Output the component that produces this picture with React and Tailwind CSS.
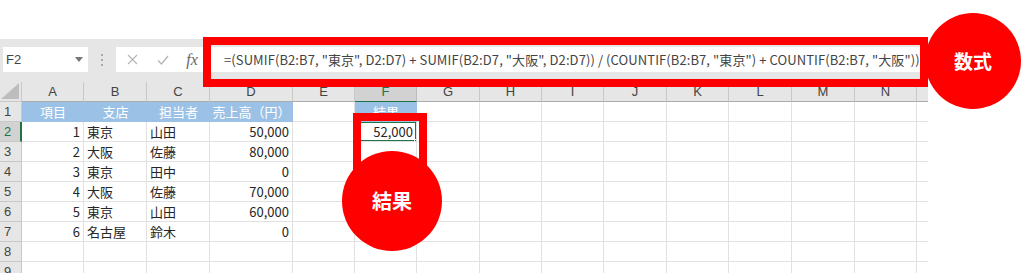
import React from "react";

const COLS = [
  { l: "A", w: 62 },
  { l: "B", w: 63 },
  { l: "C", w: 63 },
  { l: "D", w: 83 },
  { l: "E", w: 62 },
  { l: "F", w: 62 },
  { l: "G", w: 63 },
  { l: "H", w: 62 },
  { l: "I", w: 62 },
  { l: "J", w: 63 },
  { l: "K", w: 62 },
  { l: "L", w: 63 },
  { l: "M", w: 63 },
  { l: "N", w: 62 },
];

// row data: [A, B, C, D]
const DATA = [
  ["1", "東京", "山田", "50,000"],
  ["2", "大阪", "佐藤", "80,000"],
  ["3", "東京", "田中", "0"],
  ["4", "大阪", "佐藤", "70,000"],
  ["5", "東京", "山田", "60,000"],
  ["6", "名古屋", "鈴木", "0"],
];

const HEAD = ["項目", "支店", "担当者", "売上高（円）"];

const FORMULA =
  '=(SUMIF(B2:B7, "東京", D2:D7) + SUMIF(B2:D7, "大阪", D2:D7)) / (COUNTIF(B2:B7, "東京") + COUNTIF(B2:B7, "大阪"))';

const cellBase =
  "h-[20px] border-r border-b border-[#e1e1e1] px-[3px] flex items-center overflow-hidden whitespace-nowrap text-[13px] text-[#262626]";

function Cell({ row, col }) {
  // header row (row 1)
  if (row === 1) {
    if (col < 4) {
      return (
        <div className="h-[20px] bg-[#9bc2e6] border-b border-[#9bc2e6] flex items-center justify-center text-white text-[13px]">
          {HEAD[col]}
        </div>
      );
    }
    if (col === 5) {
      return (
        <div className="h-[20px] bg-[#9bc2e6] border-b border-[#9bc2e6] flex items-center justify-center text-white text-[13px]">
          結果
        </div>
      );
    }
    return <div className={cellBase} />;
  }
  const d = DATA[row - 2];
  if (d && col < 4) {
    const right = col === 0 || col === 3;
    return (
      <div className={`${cellBase} ${right ? "justify-end" : ""}`}>{d[col]}</div>
    );
  }
  if (row === 2 && col === 5) {
    return (
      <div className={`${cellBase} justify-end relative`}>
        52,000
        <div className="absolute inset-[-1px] border-2 border-[#217346] pointer-events-none" />
        <div className="absolute right-[-4px] bottom-[-4px] w-[6px] h-[6px] bg-[#217346] border border-white" />
      </div>
    );
  }
  return <div className={cellBase} />;
}

export default function App() {
  const rows = [1, 2, 3, 4, 5, 6, 7, 8, 9];
  return (
    <div className="relative w-[1024px] h-[279px] bg-white overflow-hidden font-['Noto_Sans_CJK_JP',sans-serif]">
      <div className="h-[39px]" />
      <div className="w-[928px]">
        {/* formula bar */}
        <div className="h-[43px] bg-[#e6e6e6] flex items-start pt-[8px]">
          <div className="ml-[3px] w-[85px] h-[25px] bg-white flex items-center justify-between px-[3px] text-[13px] text-[#444] font-['Liberation_Sans',sans-serif]">
            <span>F2</span>
            <svg width="8" height="5" viewBox="0 0 8 5" className="mr-[2px]">
              <path d="M0 0 L8 0 L4 5 Z" fill="#777" />
            </svg>
          </div>
          <div className="w-[28px] h-[25px] flex flex-col items-center justify-center gap-[3px]">
            <div className="w-[2px] h-[2px] bg-[#aaa]" />
            <div className="w-[2px] h-[2px] bg-[#aaa]" />
            <div className="w-[2px] h-[2px] bg-[#aaa]" />
          </div>
          <div className="flex-1 h-[25px] bg-white flex items-center">
            <div className="w-[32px] flex justify-center">
              <svg width="11" height="11" viewBox="0 0 11 11">
                <path d="M1 1 L10 10 M10 1 L1 10" stroke="#b5b5b5" strokeWidth="1.2" />
              </svg>
            </div>
            <div className="w-[30px] flex justify-center">
              <svg width="12" height="10" viewBox="0 0 12 10">
                <path d="M1 5.5 L4.5 9 L11 1" stroke="#b5b5b5" strokeWidth="1.3" fill="none" />
              </svg>
            </div>
            <div className="w-[28px] flex justify-center font-['Liberation_Serif',serif] italic text-[16px] text-[#666]">
              fx
            </div>
            <div className="ml-[18px] text-[13px] tracking-[0.09px] text-[#444] whitespace-nowrap">{FORMULA}</div>
          </div>
        </div>

        {/* sheet */}
        <div className="h-[191px] overflow-hidden">
          <div className="grid grid-cols-[22px_62px_63px_63px_83px_62px_62px_63px_62px_62px_63px_62px_63px_63px_62px_11px]">
            {/* column header row */}
            <div className="h-[20px] bg-[#e6e6e6] border-r border-b border-[#c8c8c8] relative">
              <svg width="18" height="16" viewBox="0 0 18 16" className="absolute right-[2px] bottom-[2px]">
                <path d="M18 0 L18 16 L0 16 Z" fill="#bdbdbd" />
              </svg>
            </div>
            {COLS.map((c) => (
              <div
                key={c.l}
                className={`h-[20px] border-r border-b flex items-center justify-center text-[13px] font-['Liberation_Sans',sans-serif] ${
                  c.l === "F"
                    ? "bg-[#d2d2d2] text-[#217346] border-[#bcbcbc] border-b-[#217346]"
                    : "bg-[#e6e6e6] text-[#444] border-[#c8c8c8] border-b-[#ababab]"
                }`}
              >
                {c.l}
              </div>
            ))}
            <div className="h-[20px] bg-[#e6e6e6] border-b border-[#ababab]" />

            {rows.map((r) => (
              <React.Fragment key={r}>
                <div
                  className={`h-[20px] border-b border-r flex items-center pl-[4px] text-[13px] font-['Liberation_Sans',sans-serif] ${
                    r === 2
                      ? "bg-[#d2d2d2] text-[#217346] border-b-[#c8c8c8] border-r-[#217346] border-r-2"
                      : "bg-[#e6e6e6] text-[#444] border-[#c8c8c8]"
                  }`}
                >
                  {r}
                </div>
                {COLS.map((c, ci) => (
                  <Cell key={c.l} row={r} col={ci} />
                ))}
                <div className="h-[20px] border-b border-[#e1e1e1]" />
              </React.Fragment>
            ))}
          </div>
        </div>
      </div>

      {/* annotations */}
      <div className="absolute left-[203px] top-[37px] w-[725px] h-[50px] border-[8px] border-[#ff0000]" />
      <div className="absolute left-[925px] top-[13px] w-[96px] h-[96px] rounded-full bg-[#ff0000] flex items-center justify-center text-white text-[19px] font-bold">
        数式
      </div>
      <div className="absolute left-[353px] top-[113px] w-[74px] h-[70px] border-[8px] border-b-0 border-[#ff0000]" />
      <div className="absolute left-[342px] top-[151px] w-[100px] h-[100px] rounded-full bg-[#ff0000] flex items-center justify-center text-white text-[20px] font-bold">
        結果
      </div>
    </div>
  );
}
